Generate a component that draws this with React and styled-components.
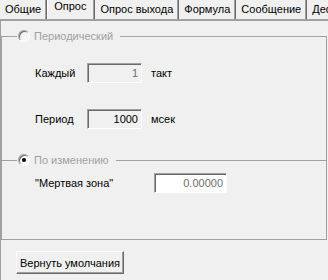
import React from 'react';
import styled, { createGlobalStyle } from 'styled-components';

const GlobalStyle = createGlobalStyle`
  html, body {
    margin: 0;
    padding: 0;
    background: #f0f0f0;
  }
  body {
    font-family: "Liberation Sans", Arial, sans-serif;
    font-size: 11px;
    color: #000;
  }
`;

const tabs = ['Общие', 'Опрос', 'Опрос выхода', 'Формула', 'Сообщение', 'Дефолт'];

const App = () => (
  <>
    <GlobalStyle />
    <Window>
      <TabStrip>
        {tabs.map((t) => (
          <Tab key={t} active={t === 'Опрос'}>
            {t}
          </Tab>
        ))}
      </TabStrip>
      <Page>
        <Frame>
          <GroupHeader>
            <Radio />
            <GroupTitle>Периодический</GroupTitle>
          </GroupHeader>
          <FieldRow first>
            <Label width={52}>Каждый</Label>
            <Field width={55} disabled>1</Field>
            <Unit>такт</Unit>
          </FieldRow>
          <FieldRow gap={26}>
            <Label width={52}>Период</Label>
            <Field width={55} disabled dark>1000</Field>
            <Unit>мсек</Unit>
          </FieldRow>
          <GroupHeader inner>
            <Radio checked />
            <GroupTitle>По изменению</GroupTitle>
          </GroupHeader>
          <FieldRow gap={6} last>
            <Label width={119}>"Мертвая зона"</Label>
            <Field width={73}>0.00000</Field>
          </FieldRow>
        </Frame>
        <Footer>
          <Button>Вернуть умолчания</Button>
        </Footer>
      </Page>
    </Window>
  </>
);

const Window = styled.div`
  width: 328px;
  height: 280px;
  overflow: hidden;
  display: flex;
  flex-direction: column;
  background: #f0f0f0;
`;

const TabStrip = styled.div`
  display: flex;
  height: 19px;
  border-bottom: 2px solid #a0a0a0;
  white-space: nowrap;
`;

const Tab = styled.div`
  display: flex;
  align-items: flex-start;
  flex-shrink: 0;
  padding: ${(p) => (p.active ? '0 7px 0 6px' : '3px 4px 0 5px')};
  border-right: 1px solid #a0a0a0;
  box-shadow: 1px 0 0 #696969;
  margin-right: 1px;
  border-left: ${(p) => (p.active ? '1px solid #fff' : 'none')};
  color: #000;
  line-height: 13px;
`;

const Page = styled.div`
  flex: 1;
  display: flex;
  flex-direction: column;
  border-left: 1px solid #a0a0a0;
`;

const Frame = styled.div`
  margin-top: 15px;
  width: 324px;
  border-left: 1px solid #a0a0a0;
  border-right: 1px solid #a0a0a0;
  border-bottom: 1px solid #a0a0a0;
  padding-bottom: 46px;
  display: flex;
  flex-direction: column;
`;

const GroupHeader = styled.div`
  display: flex;
  align-items: center;
  height: 14px;
  margin-top: ${(p) => (p.inner ? '24px' : '-7px')};
  color: #a0a0a0;

  &::before {
    content: '';
    width: 15px;
    border-top: 1px solid #a0a0a0;
  }

  &::after {
    content: '';
    flex: 1;
    margin-left: 7px;
    border-top: 1px solid #a0a0a0;
  }
`;

const Radio = styled.span`
  position: relative;
  width: 10px;
  height: 10px;
  margin-left: 1px;
  border-radius: 50%;
  border: 1px solid;
  border-color: #a0a0a0 #fff #fff #a0a0a0;
  background: ${(p) => (p.checked ? '#fff' : '#f4f4f4')};
  box-shadow: inset 1px 1px 0 #696969;

  &::after {
    content: '';
    display: ${(p) => (p.checked ? 'block' : 'none')};
    position: absolute;
    left: 3px;
    top: 3px;
    width: 4px;
    height: 4px;
    border-radius: 50%;
    background: #000;
  }
`;

const GroupTitle = styled.span`
  margin-left: 4px;
  color: #a0a0a0;
`;

const FieldRow = styled.div`
  display: flex;
  align-items: center;
  margin-top: ${(p) => (p.first ? '20px' : `${p.gap}px`)};
  padding-left: 33px;
`;

const Label = styled.span`
  width: ${(p) => p.width}px;
`;

const Field = styled.div`
  box-sizing: border-box;
  width: ${(p) => p.width}px;
  height: 20px;
  padding: 0 3px;
  display: flex;
  align-items: center;
  justify-content: flex-end;
  border: 1px solid;
  border-color: #a0a0a0 #fff #fff #a0a0a0;
  box-shadow: inset 1px 1px 0 #696969;
  background: ${(p) => (p.disabled ? '#f0f0f0' : '#fff')};
  color: ${(p) => (p.dark ? '#000' : '#6d6d6d')};
`;

const Unit = styled.span`
  margin-left: 9px;
`;

const Footer = styled.div`
  padding: 11px 0 0 15px;
`;

const Button = styled.button`
  height: 23px;
  padding: 0 3px;
  font-family: inherit;
  font-size: 11px;
  color: #000;
  background: #f0f0f0;
  border: 1px solid;
  border-color: #fff #696969 #696969 #fff;
  box-shadow: inset -1px -1px 0 #a0a0a0;
  border-radius: 0;
`;

export default App;
